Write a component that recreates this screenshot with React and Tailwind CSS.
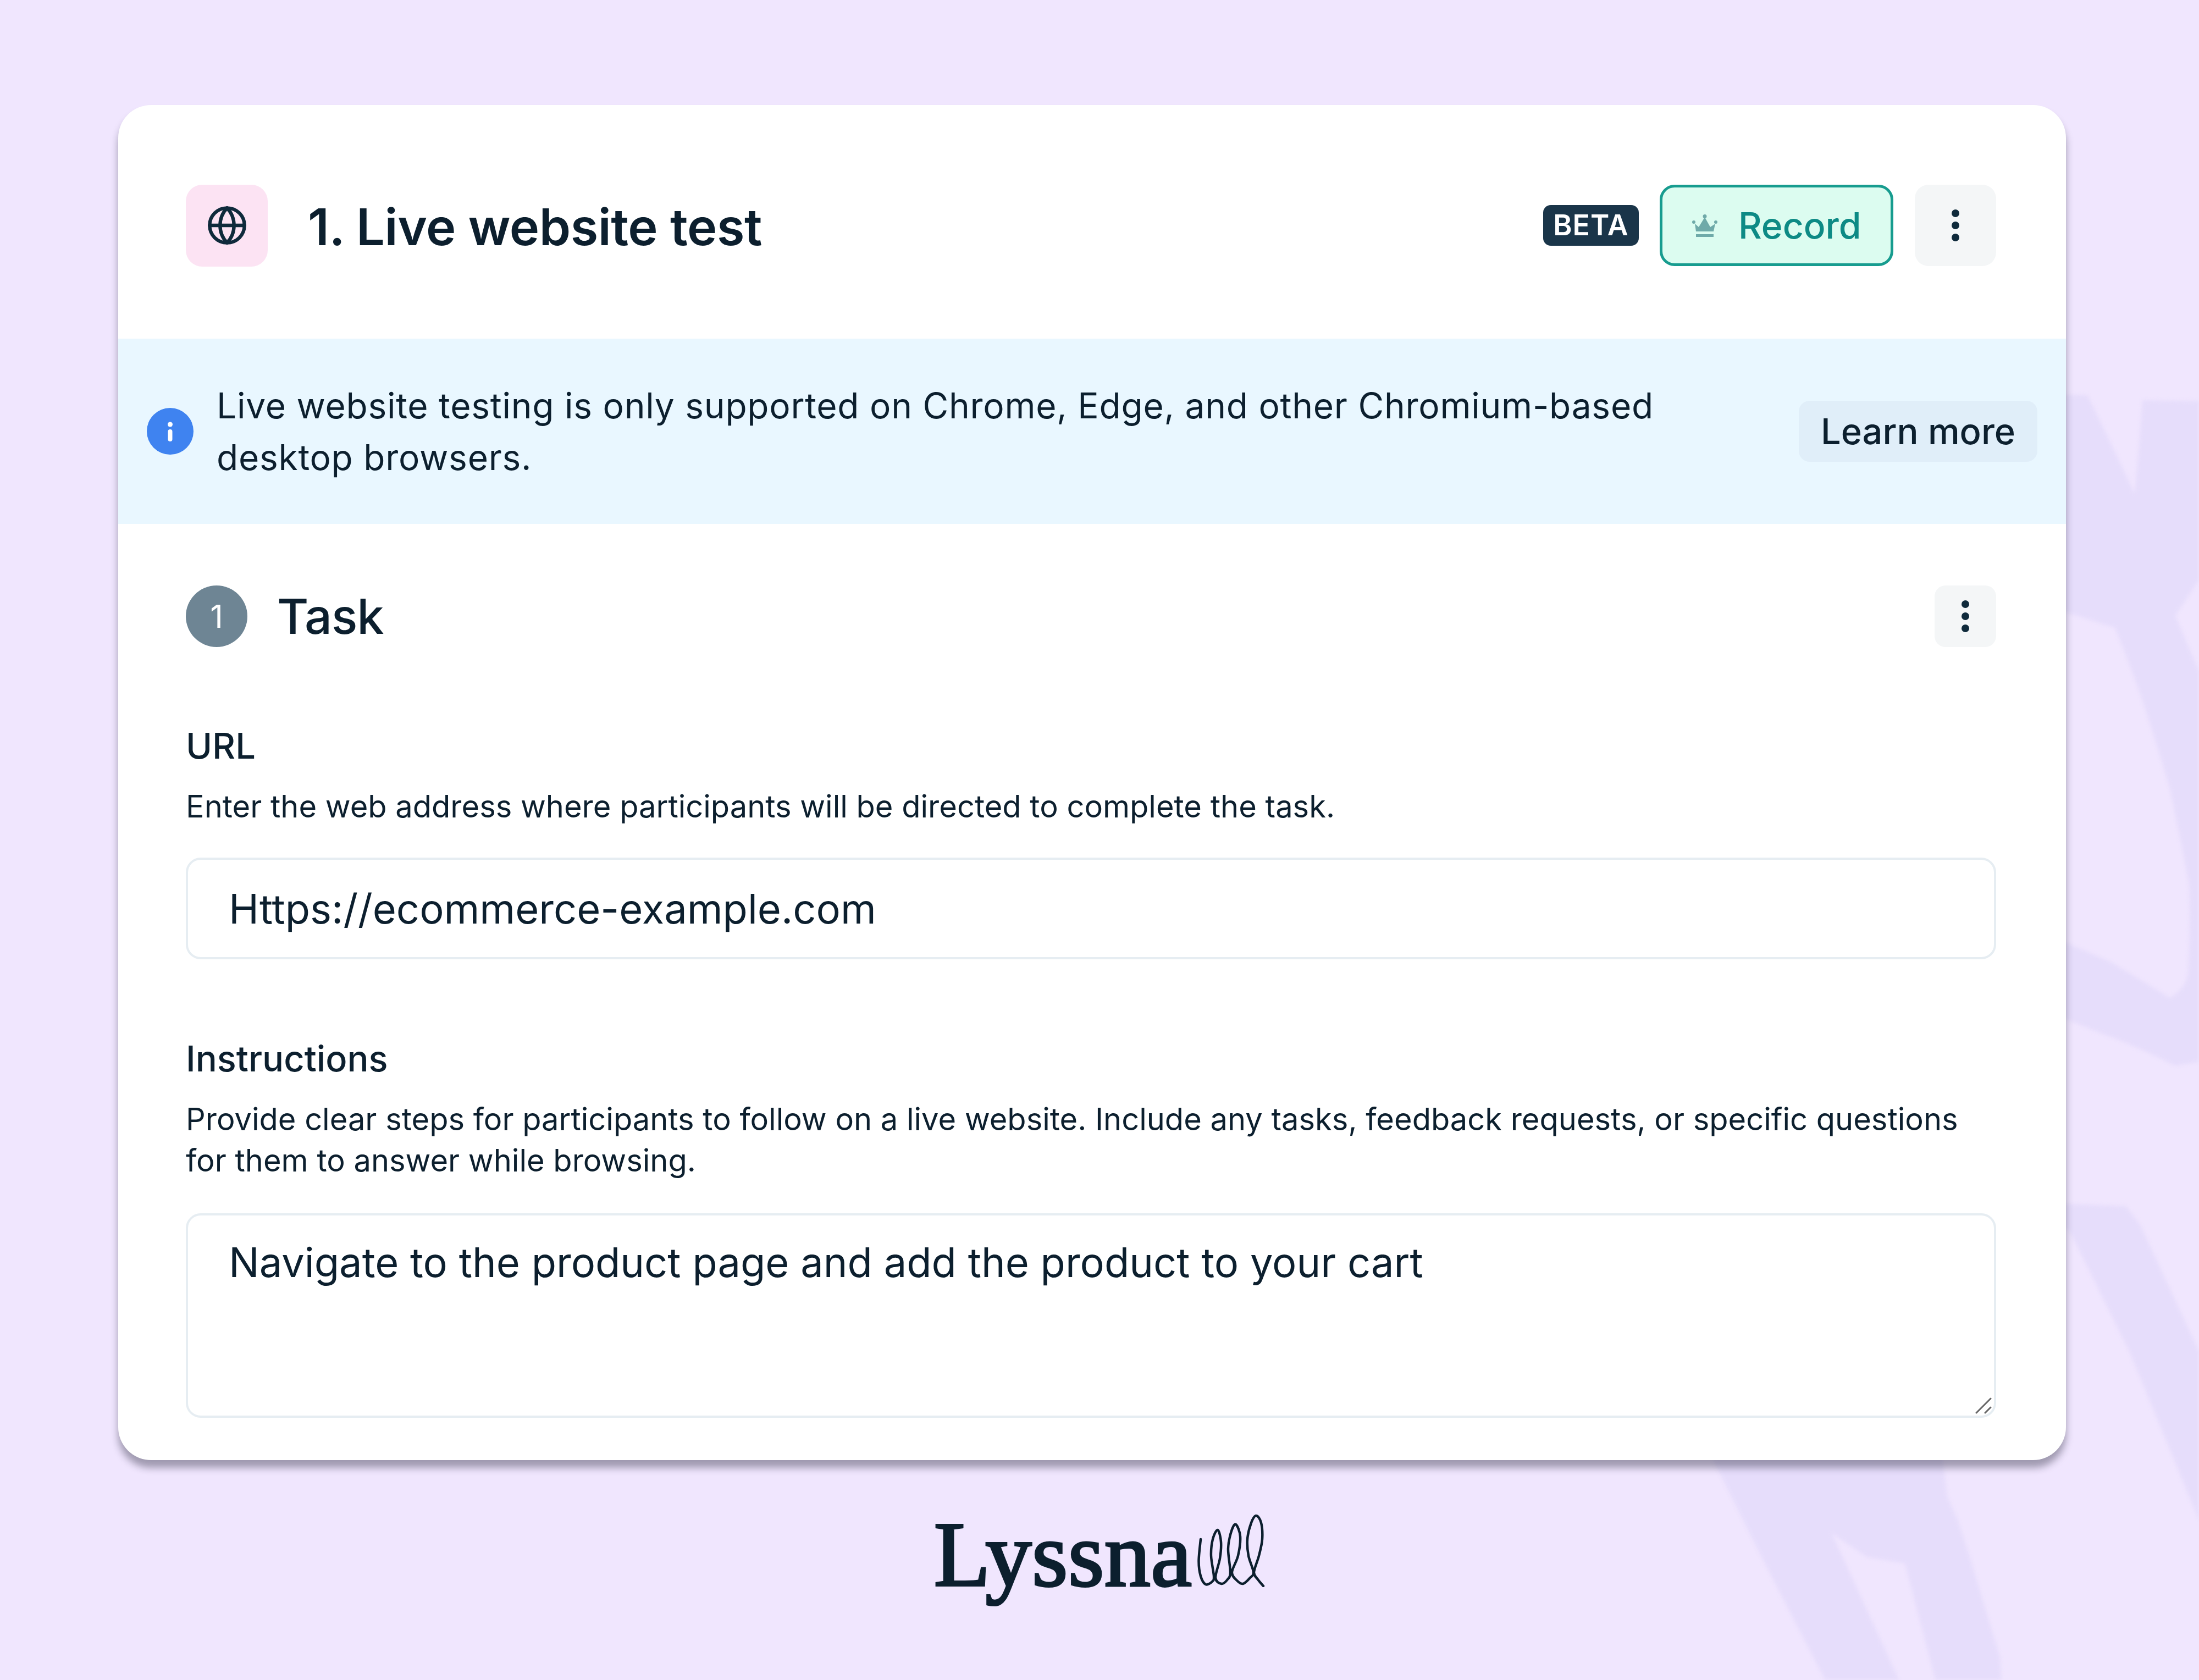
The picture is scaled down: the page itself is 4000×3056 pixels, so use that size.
import React from "react";
import { Globe } from "lucide-react";

const scribblePoints = [[6,45],[2.5,85],[6,112],[15,127],[27,122],[30,112],[25,75],[28,45],[37,28],[43,50],[41,80],[33,115],[44,126],[55,118],[60,105],[56,62],[62,30],[70,18],[78,40],[74,75],[63,105],[72,120],[83,126],[95,116],[102,105],[93,75],[91,45],[98,15],[107,2],[116,15],[118,45],[112,75],[103,105],[110,118],[120,130]];

function smoothPath(p) {
  let d = `M${p[0][0]} ${p[0][1]}`;
  for (let i = 0; i < p.length - 1; i++) {
    const a = p[Math.max(i - 1, 0)], b = p[i], c = p[i + 1], e = p[Math.min(i + 2, p.length - 1)];
    d += ` C${b[0] + (c[0] - a[0]) / 6} ${b[1] + (c[1] - a[1]) / 6} ${c[0] - (e[0] - b[0]) / 6} ${c[1] - (e[1] - b[1]) / 6} ${c[0]} ${c[1]}`;
  }
  return d;
}

function Dots() {
  return (
    <svg width="14" height="58" viewBox="0 0 14 58" fill="#0f2a3b">
      <circle cx="7" cy="7" r="7" />
      <circle cx="7" cy="29" r="7" />
      <circle cx="7" cy="51" r="7" />
    </svg>
  );
}

function Background() {
  return (
    <svg className="absolute inset-0 blur-[3px]" width="4000" height="3056" viewBox="0 0 4000 3056" fill="#e6ddfb">
      <path d="M3700 717 L3797 719 Q3840 806 3883 898 Q3890 828 3897 728 L4010 730 L4010 1040 L3957 1120 L4010 1245 L4010 1929 L3957 1939 Q3880 1900 3823 1880 L3700 1830 L3700 1690 L3840 1750 L3947 1815 Q3975 1800 3980 1771 Q3985 1690 3982 1609 Q3965 1520 3947 1435 Q3925 1360 3900 1283 Q3875 1210 3847 1142 L3700 1095 Z" />
      <path d="M3700 2188 L3867 2194 L3893 2228 L4010 2480 L4010 2790 L3874 2460 L3765 2240 L3700 2200 Z" />
      <path d="M3108 2640 L3532 2640 L3542 2722 L3561 2765 L3583 2832 L3638 3015 L3641 3066 L3523 3066 L3465 2844 L3395 2832 L3332 2789 L3459 3066 L3325 3066 L3204 2832 Z" />
    </svg>
  );
}

function Logo() {
  return (
    <div className="flex items-end justify-center h-[298px] pb-[42px]">
      <span className="font-['Liberation_Serif',serif] font-normal text-[168px] leading-[170px] tracking-[0.5px] [-webkit-text-stroke:4px_#0c1f2e] text-[#0c1f2e]">Lyssna</span>
      <svg className="ml-[10px] mb-[25px]" width="123" height="132" viewBox="0 0 123 132" fill="none" stroke="#0c1f2e" strokeWidth="4.5" strokeLinecap="round" strokeLinejoin="round">
        <path d={smoothPath(scribblePoints)} />
      </svg>
    </div>
  );
}

export default function App() {
  return (
    <div className="relative w-[4000px] h-[3056px] overflow-hidden bg-[#f0e6fe] font-['Inter',sans-serif] text-[#0c1f2e]">
      <Background />
      <div className="relative pt-[191px]">
        <div className="ml-[215px] w-[3543px] h-[2465px] rounded-[60px] overflow-hidden bg-white flex flex-col shadow-[0_14px_14px_rgba(30,30,50,0.38)]">
          <div className="h-[425px] shrink-0 flex items-center pl-[123px] pr-[127px] pt-[13px]">
            <div className="w-[149px] h-[149px] rounded-[30px] bg-[#fce3f3] flex items-center justify-center">
              <Globe size={76} strokeWidth={2} color="#0f2a3b" />
            </div>
            <h1 className="ml-[73px] mt-[5px] text-[92px] leading-[110px] font-semibold tracking-[-0.5px]">1. Live website test</h1>
            <div className="ml-auto flex items-center">
              <span className="w-[174px] h-[74px] rounded-[14px] bg-[#1a3549] text-white text-[52px] font-semibold tracking-[1px] flex items-center justify-center">BETA</span>
              <div className="ml-[38px] w-[425px] h-[148px] rounded-[27px] border-[5px] border-[#179c8f] bg-[#dcfcf0] flex items-center pl-[54px]">
                <svg width="46" height="41" viewBox="0 0 46 41" fill="#6faaa9">
                  <path d="M5 17 L7 31 L39 31 L42 17 L33 23 L23 5 L12 23 Z" />
                  <circle cx="3" cy="14" r="3" />
                  <circle cx="23" cy="3.5" r="3.5" />
                  <circle cx="43" cy="14" r="3" />
                  <rect x="7" y="36" width="32" height="5" />
                </svg>
                <span className="ml-[38px] text-[66px] font-medium text-[#0d8a85]">Record</span>
              </div>
              <div className="ml-[39px] w-[148px] h-[148px] rounded-[25px] bg-[#f4f6f7] flex items-center justify-center">
                <Dots />
              </div>
            </div>
          </div>

          <div className="h-[337px] shrink-0 bg-[#e9f7ff] flex items-center pl-[52px] pr-[52px]">
            <svg className="shrink-0" width="85" height="85" viewBox="0 0 85 85">
              <circle cx="42.5" cy="42.5" r="42.5" fill="#3f83f0" />
              <circle cx="42.5" cy="30" r="4.5" fill="#fff" />
              <rect x="38.5" y="39" width="8" height="22" rx="4" fill="#fff" />
            </svg>
            <p className="ml-[42px] w-[2760px] text-[64px] leading-[94px] tracking-[0.75px]">
              Live website testing is only supported on Chrome, Edge, and other Chromium-based desktop browsers.
            </p>
            <div className="ml-auto w-[434px] h-[111px] rounded-[20px] bg-[#e0eef9] flex items-center justify-center text-[65px] font-medium">Learn more</div>
          </div>

          <div className="flex-1 pt-[112px] pl-[123px] pr-[127px]">
            <div className="flex items-center h-[112px]">
              <div className="w-[112px] h-[112px] rounded-full bg-[#6e8594] text-white text-[58px] flex items-center justify-center">1</div>
              <h2 className="ml-[54px] text-[88px] font-medium tracking-[-1px]">Task</h2>
              <div className="ml-auto w-[112px] h-[112px] rounded-[20px] bg-[#f4f6f7] flex items-center justify-center">
                <Dots />
              </div>
            </div>

            <div className="mt-[134px] text-[65px] leading-[92px] font-medium">URL</div>
            <p className="mt-[27px] text-[56px] leading-[75px]">Enter the web address where participants will be directed to complete the task.</p>
            <div className="mt-[55px] h-[185px] rounded-[27px] border-[4px] border-[#e6edf2] flex items-center pl-[74px] pt-[2px] text-[74px]">Https://ecommerce-example.com</div>

            <div className="mt-[135px] text-[65px] leading-[92px] font-medium">Instructions</div>
            <p className="mt-[27px] text-[56px] leading-[75px]">Provide clear steps for participants to follow on a live website. Include any tasks, feedback requests, or specific questions for them to answer while browsing.</p>
            <div className="relative mt-[58px] h-[372px] rounded-[27px] border-[4px] border-[#e6edf2] pl-[74px] pt-[40px] text-[74px] leading-[90px]">
              Navigate to the product page and add the product to your cart
              <svg className="absolute right-[2px] bottom-[2px]" width="32" height="32" viewBox="0 0 32 32" stroke="#666" strokeWidth="3" strokeLinecap="round">
                <path d="M2 29 L28 3 M18 29 L28 19" />
              </svg>
            </div>
          </div>
        </div>
        <Logo />
      </div>
    </div>
  );
}
